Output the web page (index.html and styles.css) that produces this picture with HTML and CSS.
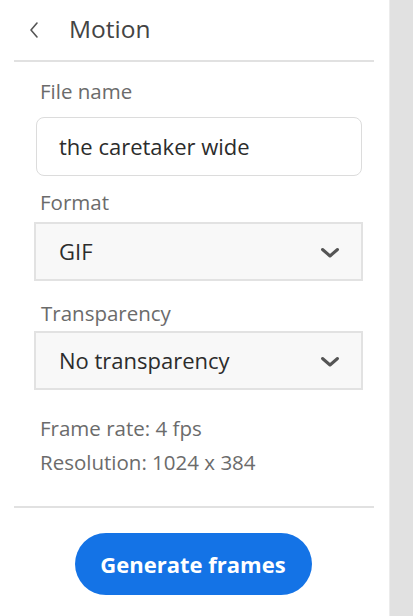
FILE: index.html
```
<!DOCTYPE html>
<html>
<head>
<meta charset="utf-8">
<link rel="stylesheet" href="styles.css">
</head>
<body>
<div class="app">
  <div class="panel">
    <div class="header">
      <svg class="back" width="12" height="18" viewBox="0 0 12 18"><path d="M9 2 L3 9 L9 16" fill="none" stroke="#555" stroke-width="1.6" stroke-linecap="round" stroke-linejoin="round"/></svg>
      <span class="title">Motion</span>
    </div>
    <div class="rule"></div>
    <div class="form">
      <div class="label l1">File name</div>
      <div class="input">the caretaker wide</div>
      <div class="label l2">Format</div>
      <div class="select">
        <span>GIF</span>
        <svg class="chev" width="20" height="12" viewBox="0 0 20 12"><path d="M2.5 2.5 L10 9 L17.5 2.5" fill="none" stroke="#555" stroke-width="3" stroke-linecap="round" stroke-linejoin="round"/></svg>
      </div>
      <div class="label l3">Transparency</div>
      <div class="select">
        <span>No transparency</span>
        <svg class="chev" width="20" height="12" viewBox="0 0 20 12"><path d="M2.5 2.5 L10 9 L17.5 2.5" fill="none" stroke="#555" stroke-width="3" stroke-linecap="round" stroke-linejoin="round"/></svg>
      </div>
      <div class="info">
        <div>Frame rate: 4 fps</div>
        <div>Resolution: 1024 x 384</div>
      </div>
    </div>
    <div class="rule rule2"></div>
    <div class="actions">
      <button class="btn">Generate frames</button>
    </div>
  </div>
  <div class="side"></div>
</div>
</body>
</html>
```
FILE: styles.css
```
* { box-sizing: border-box; }
html, body { margin: 0; padding: 0; }
body {
  font-family: "Open Sans", "Lato", sans-serif;
  background: #fff;
}
.app {
  display: flex;
  width: 413px;
  height: 616px;
}
.panel {
  width: 389px;
  background: #fff;
  display: flex;
  flex-direction: column;
}
.side {
  flex: 1;
  background: #e1e1e1;
  border-left: 1px solid #ececec;
}
.header {
  height: 60px;
  display: flex;
  align-items: center;
  padding-left: 28px;
  padding-bottom: 3px;
}
.back { margin-right: 29px; margin-top: 2px; }
.title {
  font-size: 24.5px;
  color: #444;
}
.rule {
  height: 2px;
  background: #e1e1e1;
  margin: 0 15px 0 14px;
}
.form {
  padding: 0 26px 0 34px;
  display: flex;
  flex-direction: column;
}
.label {
  font-size: 20.5px;
  line-height: 28px;
  color: #6b6b6b;
  padding-left: 6px;
}
.l1 { margin-top: 15px; }
.l2 { margin-top: 12px; }
.l3 { margin-top: 18px; padding-left: 7px; }
.input {
  margin: 12px 1px 0 2px;
  height: 59px;
  border: 1.5px solid #dcdcdc;
  border-radius: 8px;
  display: flex;
  align-items: center;
  padding-left: 22px;
  padding-bottom: 2px;
  font-size: 22px;
  color: #2c2c2c;
}
.l2 + .select { margin-top: 6px; }
.l3 + .select { margin-top: 4px; }
.select {
  height: 59px;
  background: #f8f8f8;
  border: 2px solid #e2e2e2;
  display: flex;
  align-items: center;
  justify-content: space-between;
  padding: 0 21px 2px 23px;
  font-size: 22px;
  color: #2c2c2c;
}
.chev { margin-top: 4px; }
.info {
  margin-top: 21px;
  padding-left: 6px;
  font-size: 20.5px;
  line-height: 34px;
  color: #6b6b6b;
}
.rule2 { margin-top: 27px; }
.actions {
  display: flex;
  justify-content: center;
  padding: 25px 0 0 0;
}
.btn {
  width: 237px;
  height: 62px;
  border: none;
  border-radius: 31px;
  background: #1473e6;
  color: #fff;
  font-family: "Open Sans", "Lato", sans-serif;
  font-weight: 700;
  font-size: 22px;
  margin-right: 3px;
}
```
